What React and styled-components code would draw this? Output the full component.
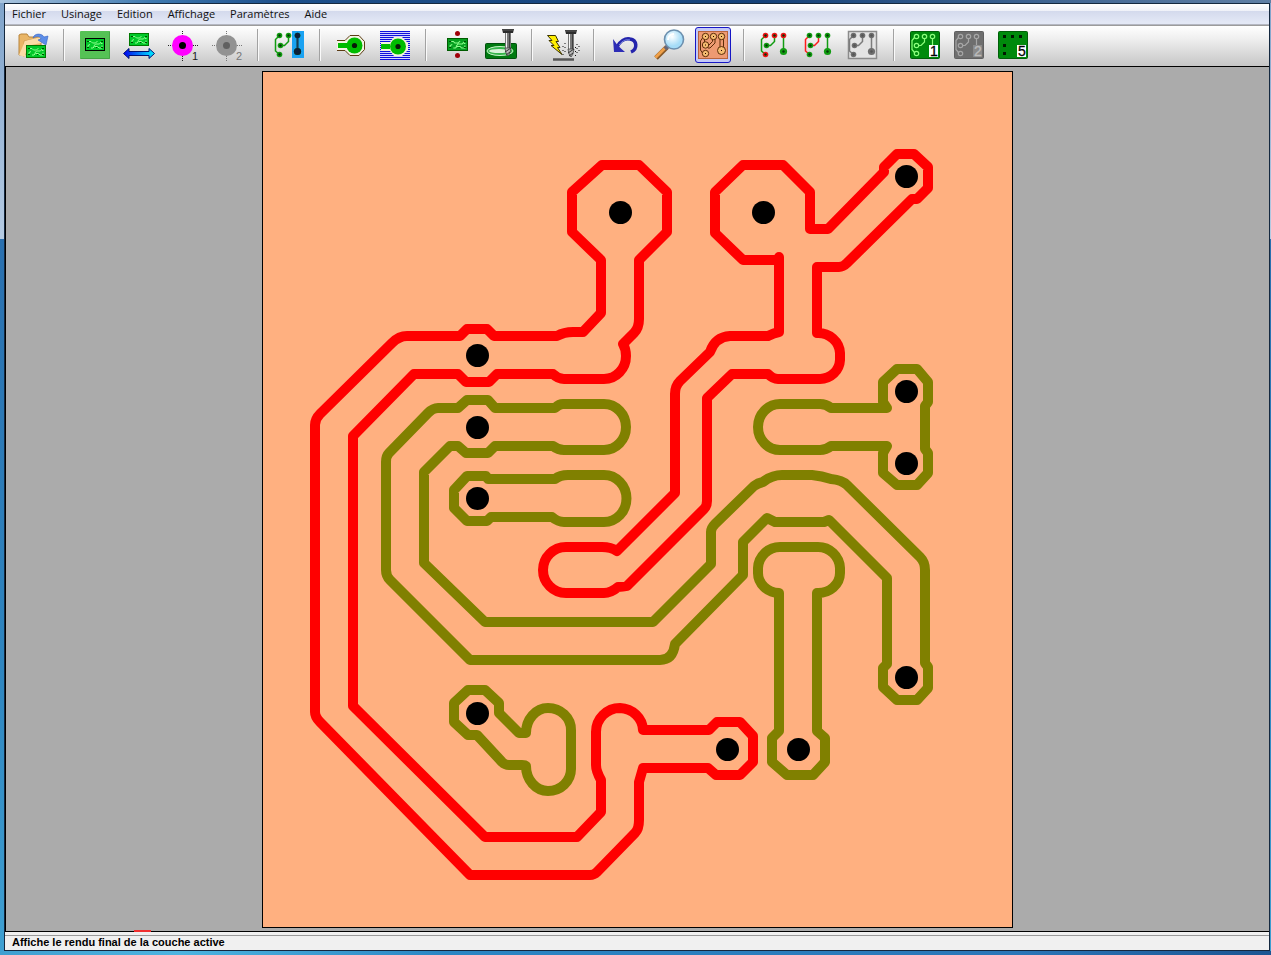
import React from "react";
import styled, { createGlobalStyle } from "styled-components";

const GlobalStyle = createGlobalStyle`
	body {
		margin: 0;
		font-family: "Liberation Sans", Arial, sans-serif;
	}

	* {
		box-sizing: border-box;
	}
`;

const Desktop = styled.div`
	height: 100vh;
	padding: 3px 1px 4px 4px;
	background:
		linear-gradient(90deg, #a9c4df, #3e79b0 12%, #1d4f8b 22%, #16427a 60%, #5f7fa5) top / 100% 3px no-repeat,
		linear-gradient(90deg, #3f9fd0, #4db4e0 14%, #2a86c4 35%, #2a76b8 80%, #1b5592) bottom / 100% 4px no-repeat,
		linear-gradient(#7fa3cb, #b5cbe3 25%, #2a70af 25%, #2f86c0 70%, #3fa0d2);
`;

const Window = styled.div`
	display: flex;
	flex-direction: column;
	height: 100%;
	border: 1px solid #14283f;
	background: #f0f0f0;
`;

const MenuBar = styled.nav`
	display: flex;
	gap: 1px;
	height: 21px;
	background: linear-gradient(#ffffff, #eef0f8 36%, #d4daed 37%, #e3e8f6 92%);
	border-bottom: 1px solid #b4b7c2;
`;

const MenuItem = styled.button`
	padding: 0 7px;
	font-family: "Open Sans", "Noto Sans", sans-serif;
	font-size: 11px;
	line-height: 18px;
	color: #101010;
	border: none;
	background: transparent;
`;

const Toolbar = styled.div`
	display: flex;
	align-items: center;
	gap: 8px;
	height: 42px;
	padding: 0 10px 2px;
	background: linear-gradient(#ffffff, #f0f0f0 30%, #c6c6c6);
	border-top: 1px solid #9c9c9c;
	border-bottom: 1px solid #000;
`;

const Separator = styled.div`
	width: 2px;
	height: 32px;
	margin: 0 4px;
	background: #a2a2a2;
	border-right: 1px solid #fafafa;
`;

const ToolButton = styled.button`
	display: flex;
	align-items: center;
	justify-content: center;
	width: 36px;
	height: 36px;
	padding: 0;
	border: ${(props) => (props.$active ? "1px solid #1616c4" : "none")};
	border-radius: 3px;
	background: ${(props) => (props.$active ? "#c3c8f6" : "transparent")};
`;

const Icon = styled.svg`
	width: 32px;
	height: 32px;
	flex: none;
	overflow: visible;
	font-family: "Liberation Sans", Arial, sans-serif;
`;

const Workspace = styled.main`
	display: flex;
	flex: 1;
	justify-content: center;
	min-height: 0;
	padding: 4px 0 3px;
	background: #ababab;
	border-left: 1px solid #000;
`;

const Board = styled.svg`
	height: 100%;
	max-width: 100%;
	aspect-ratio: 751 / 857;
`;

const BottomLine = styled.div`
	display: flex;
	flex: none;
	align-items: flex-end;
	height: 1px;
	padding-left: 129px;
	background: #000;
`;

const Mark = styled.div`
	width: 17px;
	height: 2px;
	background: #f03030;
`;

const StatusBar = styled.footer`
	height: 15px;
	margin-top: 3px;
	padding-left: 7px;
	font-size: 11px;
	font-weight: bold;
	line-height: 13px;
	color: #000;
	border-top: 1px solid #9a9a9a;
`;

/* small printed circuit used in several icons */
const MiniBoard = ({ x, y, width = 20, height = 13, stroke = "#007800", fill = "#00c828", line = "#8cff8c" }) => (
	<svg x={x} y={y} width={width} height={height} viewBox="0 0 20 13" preserveAspectRatio="none">
		<rect x="0.5" y="0.5" width="19" height="12" fill={fill} stroke={stroke} />
		<path d="M3 3.500h3l1.500 1.500h3l2-2M16.500 3.500l-2 2.500h-4l-2 2.500M3 10V7.500l2-1M6 10h2l1.500-1.500h3L14 10h3V7.500M16 5.500h1.500" fill="none" stroke={line} />
		<path d="M2 3h2v1H2zM16 3h2v1h-2zM2 9h2v1H2zM11 9h1v1h-1zM16 9h2v1h-2z" fill="#004c00" />
	</svg>
);

const Pad = ({ x, y, r = 2.8, color = "#119c11", hole = "#063806" }) => (
	<g>
		<circle cx={x} cy={y} r={r} fill={color} />
		<circle cx={x} cy={y} r="1.2" fill={hole} />
	</g>
);

const Circuit = ({ pads = "#119c11", ends = pads, middle = ends, last = ends, track = "#119c11", side = track, link = side, hole }) => (
	<g>
		<g fill="none" strokeWidth="1.5">
			<path d="M6.500 6.500L2.500 10.500v11.500l4 3.500" stroke={side} />
			<path d="M7.500 16.500h4l4-4v-6" stroke={link} />
			<path d="M24.500 6.500v16" stroke={track} />
		</g>
		<Pad x={6.5} y={6.5} color={ends} hole={hole} />
		<Pad x={15.5} y={6.5} color={middle} hole={hole} />
		<Pad x={24.5} y={6.5} color={last} hole={hole} />
		<Pad x={7.5} y={16.5} color={pads} hole={hole} />
		<Pad x={6.5} y={25.5} color={ends} hole={hole} />
		<Pad x={24.5} y={22.5} r={3.6} color={pads} hole={hole} />
	</g>
);

const Drill = () => (
	<g>
		<path d="M18 1h12l-1 4h-10z" fill="#2c2c2c" />
		<path d="M19 2h10" stroke="#5a5a5a" />
		<rect x="21" y="5" width="6" height="16" fill="#777" />
		<path d="M22.500 5v16" stroke="#f4f4f4" />
		<path d="M25.500 5v16" stroke="#404040" />
		<path d="M21 20h6l-1 5-2 3-2-3z" fill="#b8b8b8" stroke="#444" strokeWidth="0.8" />
		<path d="M21 24l6-4M22 27l4-3" stroke="#333" />
	</g>
);

const Target = ({ color, center, number, ink }) => (
	<Icon>
		<path d="M15.500 2v5M15.500 27v5M1 16.500h5M26 16.500h5" stroke={ink} strokeDasharray="1 1" />
		<circle cx="15.500" cy="16.500" r="10.500" fill={color} />
		<circle cx="15.500" cy="16.500" r="3.500" fill={center} />
		<text x="25" y="31" fontSize="11" fill={ink}>{number}</text>
	</Icon>
);

const Layer = ({ fill, edge, line, number, label, ink, dots }) => (
	<Icon>
		<rect x="1.500" y="2.500" width="29" height="27" rx="1" fill={fill} stroke={edge} />
		{dots ? (
			<path d="M6 6h3v3H6zM14 6h3v3h-3zM22 6h3v3h-3zM6 15h3v3H6zM6 23h3v3H6z" fill="#001800" />
		) : (
			<g fill="none" stroke={line} strokeWidth="1.200">
				<path d="M5.500 8.500L3 11.500v9l2.500 3M10 16.500h2l3.500-3.500v-3M23.500 10v6" />
				<circle cx="7.500" cy="7.500" r="2.200" />
				<circle cx="15.500" cy="7.500" r="2.200" />
				<circle cx="23.500" cy="7.500" r="2.200" />
				<circle cx="7.500" cy="16.500" r="2.200" />
				<circle cx="7.500" cy="24.500" r="2.200" />
			</g>
		)}
		<rect x="20" y="16" width="9" height="12" fill={label} />
		<text x="21" y="27" fontSize="14" stroke={ink} strokeWidth="0.300" fill={ink}>{number}</text>
	</Icon>
);

const OpenIcon = () => (
	<Icon>
		<path d="M2 26V6l2-1h6l2 3h12v16z" fill="#e9b566" stroke="#b9853c" />
		<path d="M7 28V12l14-3v5l-8 1z" fill="#fde4b4" stroke="#cf9d55" />
		<path d="M2 26l6 2 2-11 14-3V8L8 12z" fill="#fbdca6" />
		<path d="M16 9c1-5 9-5 11-1l4-1-2 9-8-5 3-1c-1-3-5-3-8-1z" fill="#5c8de8" stroke="#3261c2" strokeWidth="0.600" />
		<MiniBoard x={9} y={16} />
	</Icon>
);

const FilledBoardIcon = () => (
	<Icon>
		<rect x="1" y="2" width="30" height="28" rx="1" fill="#55c255" />
		<path d="M1.500 29.500h29v-27" fill="none" stroke="#46a546" />
		<MiniBoard x={6} y={9} stroke="#000" />
	</Icon>
);

const MeasureIcon = () => (
	<Icon>
		<defs>
			<linearGradient id="measure">
				<stop offset="0" stopColor="#0000f0" />
				<stop offset="1" stopColor="#00f0ff" />
			</linearGradient>
		</defs>
		<MiniBoard x={6} y={4} />
		<path d="M0.500 24.500L6 19.500v3h20v-3l5.500 5L26 29.500v-3H6v3z" fill="url(#measure)" stroke="#001070" />
	</Icon>
);

const SeparateIcon = () => (
	<Icon>
		<rect x="19" y="2" width="12" height="27" fill="#1aa2f2" />
		<Circuit />
		<path d="M24.500 6.500v16" stroke="#16395c" strokeWidth="2" />
		<circle cx="24.500" cy="6.500" r="2.800" fill="#0b2038" />
		<circle cx="24.500" cy="22.500" r="3.600" fill="#0b2038" />
	</Icon>
);

const OutlineIcon = () => (
	<Icon>
		<path d="M2 11.500h8l5-5h9l5.500 6v8l-5.500 6h-9l-5-5H2" fill="#f4f4e4" />
		<path d="M2 11.500h8l5-5h9l5.500 6v8l-5.500 6h-9l-5-5H2" fill="none" stroke="#5c3c14" />
		<path d="M3 14h9v5H3z" fill="#00bc00" />
		<circle cx="19.500" cy="16.500" r="8" fill="#00bc00" />
		<circle cx="19.500" cy="16.500" r="2.600" fill="#081808" />
	</Icon>
);

const HatchIcon = () => (
	<Icon>
		<rect x="1" y="2" width="30" height="29" fill="#d4d4ff" />
		<path d="M1 2.500h30M1 4.500h30M1 6.500h30M1 8.500h30M1 10.500h30M1 12.500h30M1 14.500h30M1 16.500h30M1 18.500h30M1 20.500h30M1 22.500h30M1 24.500h30M1 26.500h30M1 28.500h30M1 30.500h30" stroke="#1010dc" />
		<path d="M2 13h9l4-5h8l6 6v7l-6 6h-8l-4-5H2z" fill="#f4f4dc" />
		<path d="M2 15h9v5H2z" fill="#00bc00" />
		<circle cx="19" cy="17.500" r="8" fill="#00bc00" />
		<circle cx="19" cy="17.500" r="2.600" fill="#081808" />
	</Icon>
);

const DrillBoardIcon = () => (
	<Icon>
		<MiniBoard x={6} y={9} width={21} fill="#06a020" stroke="#005c00" />
		<circle cx="16.500" cy="4.500" r="2.500" fill="#a00008" />
		<circle cx="16.500" cy="26.500" r="2.500" fill="#a00008" />
	</Icon>
);

const MillIcon = () => (
	<Icon>
		<rect x="0.500" y="14.500" width="31" height="15" rx="1" fill="#007a10" stroke="#00500c" />
		<ellipse cx="15" cy="22" rx="13" ry="4.500" fill="#35b54a" stroke="#c8f4c8" />
		<ellipse cx="14" cy="22" rx="10" ry="2" fill="#d9f3d9" />
		<g transform="translate(-1 -1)">
			<Drill />
		</g>
	</Icon>
);

const CutIcon = () => (
	<Icon>
		<path d="M0.500 6.500h8l3 6h-2.500l4 6h-2.500l4.500 7-11-9h3l-5-5h3z" fill="#ffee00" stroke="#3c3400" />
		<Drill />
		<path d="M18 14v11M30 15v10M16 17v10M32 17v8M28.500 18v9" stroke="#111" strokeDasharray="1 3" />
		<path d="M6 30.500h21" stroke="#555" strokeWidth="2.500" />
	</Icon>
);

const UndoIcon = () => (
	<Icon>
		<path d="M8 18c3-6 8-9 13-8 7 1 8 10 1 13" fill="none" stroke="#2424ac" strokeWidth="3.500" />
		<path d="M4 10l1 13h11l-4-3.500-4-4z" fill="#2c2cb6" />
		<path d="M10 16c4-5 8-6 11-5" fill="none" stroke="#7484dc" />
	</Icon>
);

const MagnifierIcon = () => (
	<Icon>
		<defs>
			<radialGradient id="lens" cx="0.400" cy="0.350">
				<stop offset="0" stopColor="#ffffff" />
				<stop offset="1" stopColor="#a5dcf8" />
			</radialGradient>
		</defs>
		<path d="M14 18L3 29" stroke="#8a5a28" strokeWidth="5" />
		<path d="M13 18L2.500 28.500" stroke="#f0a048" strokeWidth="3" />
		<path d="M15 17l-3 3" stroke="#667" strokeWidth="4" />
		<circle cx="21" cy="10.500" r="9.500" fill="url(#lens)" stroke="#6c8fae" strokeWidth="1.600" />
		<path d="M15 11c0-4 3-6 6-6" fill="none" stroke="#fff" strokeWidth="2" />
	</Icon>
);

const RenderIcon = () => (
	<Icon>
		<rect x="1.500" y="2.500" width="29" height="27" fill="#ee9a72" stroke="#b8643c" />
		<g fill="none" stroke="#5c2c08">
			<path d="M5.500 9L3.500 12v9l2 3M7.500 10v3M11.500 16.500l4-4v-2M11 19h2l5-5v-4M23 10v8M26.500 10v8" />
			<g fill="#f6bd70">
				<circle cx="8.500" cy="7.500" r="3.200" />
				<circle cx="16.500" cy="7.500" r="3.200" />
				<circle cx="24.500" cy="7.500" r="3.200" />
				<circle cx="8.500" cy="16" r="3.200" />
				<circle cx="8.500" cy="24.500" r="3.200" />
				<circle cx="24.500" cy="21.500" r="4" />
			</g>
		</g>
		<path d="M8 7h1v1H8zM16 7h1v1h-1zM24 7h1v1h-1zM8 15.500h1v1H8zM8 24h1v1H8zM24 21h1v1h-1z" fill="#200" />
	</Icon>
);

const PadsIcon = () => (
	<Icon>
		<Circuit ends="#ee1414" />
	</Icon>
);

const TracksIcon = () => (
	<Icon>
		<Circuit side="#ff1c1c" />
	</Icon>
);

const FramedIcon = () => (
	<Icon>
		<rect x="1.500" y="2.500" width="28" height="27" fill="#e4e4e4" stroke="#8c8c8c" strokeWidth="1.500" />
		<Circuit pads="#6e6e6e" track="#7c7c7c" hole="#555" />
	</Icon>
);

const menus = ["Fichier", "Usinage", "Edition", "Affichage", "Paramètres", "Aide"];

const toolGroups = [
	[{ label: "Ouvrir", icon: <OpenIcon /> }],
	[
		{ label: "Circuit", icon: <FilledBoardIcon /> },
		{ label: "Dimensions", icon: <MeasureIcon /> },
		{ label: "Repère 1", icon: <Target color="#ff00ff" center="#000" number="1" ink="#222" /> },
		{ label: "Repère 2", icon: <Target color="#929292" center="#606060" number="2" ink="#777" /> },
	],
	[{ label: "Séparer", icon: <SeparateIcon /> }],
	[
		{ label: "Détourage", icon: <OutlineIcon /> },
		{ label: "Hachures", icon: <HatchIcon /> },
	],
	[
		{ label: "Perçage", icon: <DrillBoardIcon /> },
		{ label: "Fraisage", icon: <MillIcon /> },
	],
	[{ label: "Usiner", icon: <CutIcon /> }],
	[
		{ label: "Annuler", icon: <UndoIcon /> },
		{ label: "Zoom", icon: <MagnifierIcon /> },
		{ label: "Rendu final", icon: <RenderIcon />, active: true },
	],
	[
		{ label: "Pastilles", icon: <PadsIcon /> },
		{ label: "Pistes", icon: <TracksIcon /> },
		{ label: "Contour", icon: <FramedIcon /> },
	],
	[
		{ label: "Couche 1", icon: <Layer fill="#008a0c" edge="#006008" line="#8cff7c" number="1" label="#fff" ink="#000" /> },
		{ label: "Couche 2", icon: <Layer fill="#6e6e6e" edge="#606060" line="#a6a6a6" number="2" label="#8a8a8a" ink="#bcbcbc" /> },
		{ label: "Couche 5", icon: <Layer fill="#008a0c" edge="#006008" number="5" label="#fff" ink="#000" dots /> },
	],
];

const redTracks = [
	"M623 344L634 333Q639 328 639 319V260L667 232V192L639 165H602L572 192V232L601 260V313L583 332H573Q564 332 557 336H494L487 329H467L460 336H407Q399 336 392 343L320 414Q315 419 315 425V712Q315 717 320 722L470 875H590Q594 875 597 872L635 833Q639 829 639 820V782L643 768H708L716 775H740L753 762V736L740 722H717L709 730H643A24 23 0 0 0 620 708A24 24 0 0 0 596 732V765Q596 771 601 780V812L577 837H485L353 706V436L414 374H458L466 382H489L497 374H553Q558 379 564 379H604A22 23 0 0 0 626 356Q626 349 623 344",
	"M779 257V332Q774 333 768 336H730Q715 337 710 352L680 381Q675 386 675 394V493L617 551Q611 547 602 547H566A23 23 0 0 0 566 593H604Q611 593 618 587Q623 587 627 586L704 509Q707 506 707 501V398L732 374H768Q773 379 778 379H820A20 20 0 0 0 840 360V353A22 21 0 0 0 817 333V267H839Q843 267 847 263L912 199H917L928 188V167L914 154H897L884 167V172L828 229H810V192L783 165H743L715 192V233L743 260H779",
];

const greenTracks = [
	"M563 404H604A22 23 0 0 1 604 450H564Q558 450 553 446H495L488 453H466L458 446H450L424 472V563L485 622H653L711 564V532Q711 528 715 524L754 486Q758 483 763 482Q772 475 782 475H812Q822 476 831 479Q842 480 847 485L920 557Q925 562 925 570V663L928 667V688L917 700H897L883 687V668L887 664V578L829 520L824 522H775L767 518L743 542V575L675 644Q673 660 660 660H470L390 580Q386 576 386 570V462Q386 456 389 453L428 413Q433 408 438 408H458L467 400H488L495 408H555Q559 404 563 404",
	"M604 475H568Q560 475 555 479H488L486 476H467L454 490V508L467 521H487L491 517H552Q558 522 564 522H604A22 23 0 0 0 604 475Z",
	"M780 404H820Q826 404 831 408H887L883 402V382L897 369H917L928 382V402L925 406V449L928 453V473L917 485H897L883 473V453L887 446H831Q826 450 820 450H780A22 23 0 0 1 780 404Z",
	"M780 547H818A22 22 0 0 1 840 568V573A22 20 0 0 1 817 593V731L825 738V762L813 775H787L772 762V738L779 731V593A22 20 0 0 1 758 573V568A22 22 0 0 1 780 547Z",
	"M468 690H485L499 703V713L519 733H526A22 25 0 0 1 548 708A23 22 0 0 1 571 730V769A23 22 0 0 1 548 791A22 25 0 0 1 526 766Q525 765 522 765H509Q505 765 502 762L477 735H468L454 722V703Z",
];

const holes = [
	[620.5, 212.5],
	[763.5, 212.5],
	[906.5, 176.5],
	[477.5, 355.5],
	[477.5, 427.5],
	[477.5, 498.5],
	[906.5, 391.5],
	[906.5, 463.5],
	[906.5, 677.5],
	[477.5, 713.5],
	[727.5, 749.5],
	[798.5, 749.5],
];

const App = () => {
	return (
		<Desktop>
			<GlobalStyle />
			<Window>
				<MenuBar>
					{menus.map((menu) => (
						<MenuItem key={menu}>{menu}</MenuItem>
					))}
				</MenuBar>
				<Toolbar>
					{toolGroups.map((group, index) => (
						<React.Fragment key={index}>
							{index > 0 && <Separator />}
							{group.map((tool) => (
								<ToolButton key={tool.label} aria-label={tool.label} $active={tool.active}>
									{tool.icon}
								</ToolButton>
							))}
						</React.Fragment>
					))}
				</Toolbar>
				<Workspace>
					<Board viewBox="262 71 751 857">
						<rect x="262.500" y="71.500" width="750" height="856" fill="#ffb080" stroke="#000" />
						<g fill="none" strokeWidth="10" strokeLinejoin="round" strokeLinecap="round">
							{greenTracks.map((d) => (
								<path key={d} d={d} stroke="#808000" />
							))}
							{redTracks.map((d) => (
								<path key={d} d={d} stroke="#ff0000" />
							))}
						</g>
						{holes.map(([x, y]) => (
							<circle key={`${x}-${y}`} cx={x} cy={y} r="11.500" />
						))}
					</Board>
				</Workspace>
				<BottomLine>
					<Mark />
				</BottomLine>
				<StatusBar>Affiche le rendu final de la couche active</StatusBar>
			</Window>
		</Desktop>
	);
};

export default App;
